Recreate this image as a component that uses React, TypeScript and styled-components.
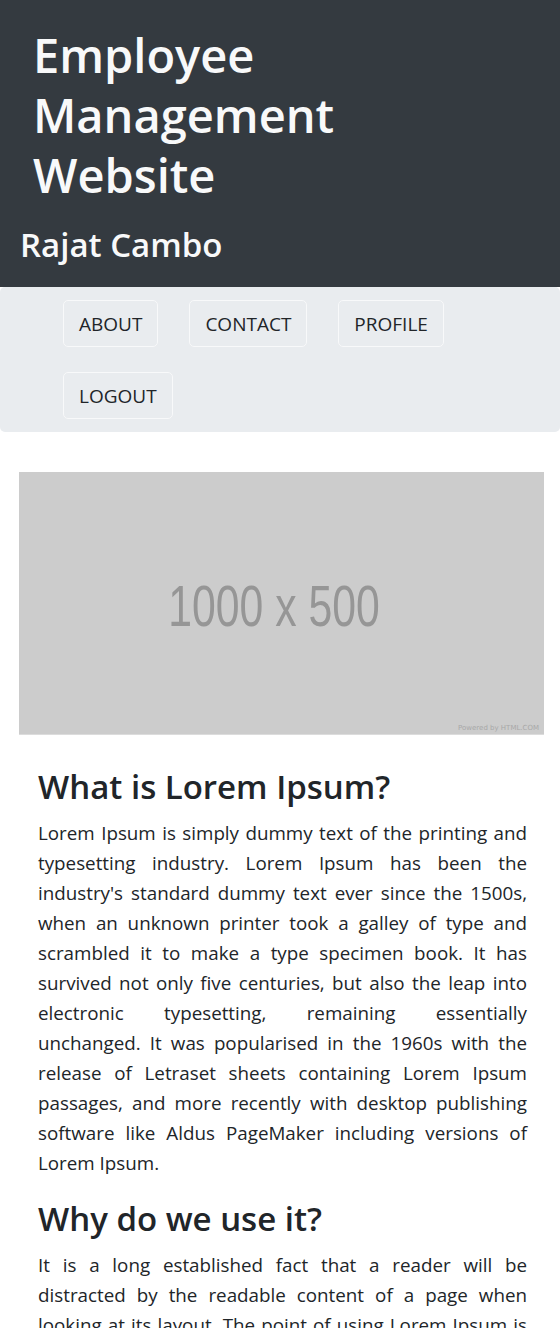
import React from 'react';
import styled, { createGlobalStyle } from 'styled-components';

const GlobalStyle = createGlobalStyle`
    * {
        box-sizing: border-box;
    }

    body {
        margin: 0;
        background: #fff;
        color: #212529;
        font-family: 'Open Sans', 'Noto Sans', sans-serif;
    }
`;

const Header = styled.header`
    padding: 25px 20px 21px;

    background: #343a40;
    color: #f8f9fa;
`;

const Title = styled.h1`
    margin: 0 0 19px;
    padding-left: 13px;
    width: 340px;

    font-size: 47px;
    font-weight: 600;
    line-height: 60px;
`;

const Author = styled.h3`
    margin: 0;

    font-size: 33px;
    font-weight: 600;
    line-height: 42px;
`;

const Nav = styled.nav`
    display: flex;
    flex-wrap: wrap;
    gap: 25px 31px;

    padding: 13px 20px 13px 63px;

    border-radius: 5px;
    background: #e9ecef;
`;

const NavButton = styled.a`
    display: inline-block;

    padding: 7.5px 15px;

    font-size: 19px;
    line-height: 30px;
    color: #212529;
    text-decoration: none;

    border: 1px solid #f8f9fa;
    border-radius: 5px;
`;

const Main = styled.main`
    padding: 40px 16px 0 19px;
`;

const Placeholder = styled.div`
    position: relative;
    display: flex;
    align-items: center;
    justify-content: center;

    width: 525px;
    aspect-ratio: 2 / 1;
    padding: 6px 14px 0 0;

    background: #cccccc;
    border-bottom: 1px solid #dcdcdc;
`;

const PlaceholderText = styled.span`
    display: inline-block;

    font-family: 'Liberation Sans', Arial, sans-serif;
    font-size: 57px;
    color: #969696;

    transform: scaleX(0.75);
`;

const Powered = styled.span`
    position: absolute;
    right: 5px;
    bottom: 2px;

    font-family: 'DejaVu Sans', sans-serif;
    font-size: 7px;
    color: #a8a8a8;
`;

const Article = styled.article`
    padding: 31px 17px 0 19px;
`;

const Heading = styled.h3`
    margin: 0 0 10px;

    font-size: 33px;
    font-weight: 600;
    line-height: 42px;
`;

const Paragraph = styled.p`
    margin: 0 0 20px;

    font-size: 18.8px;
    line-height: 30px;
    text-align: justify;
`;

const links = ['ABOUT', 'CONTACT', 'PROFILE', 'LOGOUT'];

const App: React.FC = () => (
    <>
        <GlobalStyle />
        <Header>
            <Title>Employee Management Website</Title>
            <Author>Rajat Cambo</Author>
        </Header>
        <Nav>
            {links.map((link) => (
                <NavButton key={link} href="#">
                    {link}
                </NavButton>
            ))}
        </Nav>
        <Main>
            <Placeholder>
                <PlaceholderText>1000 x 500</PlaceholderText>
                <Powered>Powered by HTML.COM</Powered>
            </Placeholder>
            <Article>
                <Heading>What is Lorem Ipsum?</Heading>
                <Paragraph>
                    Lorem Ipsum is simply dummy text of the printing and typesetting industry. Lorem Ipsum has been
                    the industry's standard dummy text ever since the 1500s, when an unknown printer took a galley of
                    type and scrambled it to make a type specimen book. It has survived not only five centuries, but
                    also the leap into electronic typesetting, remaining essentially unchanged. It was popularised in
                    the 1960s with the release of Letraset sheets containing Lorem Ipsum passages, and more recently
                    with desktop publishing software like Aldus PageMaker including versions of Lorem Ipsum.
                </Paragraph>
                <Heading>Why do we use it?</Heading>
                <Paragraph>
                    It is a long established fact that a reader will be distracted by the readable content of a page
                    when looking at its layout. The point of using Lorem Ipsum is that it has a more-or-less normal
                    distribution of letters, as opposed to using 'Content here, content here', making it look like
                    readable English.
                </Paragraph>
            </Article>
        </Main>
    </>
);

export default App;
